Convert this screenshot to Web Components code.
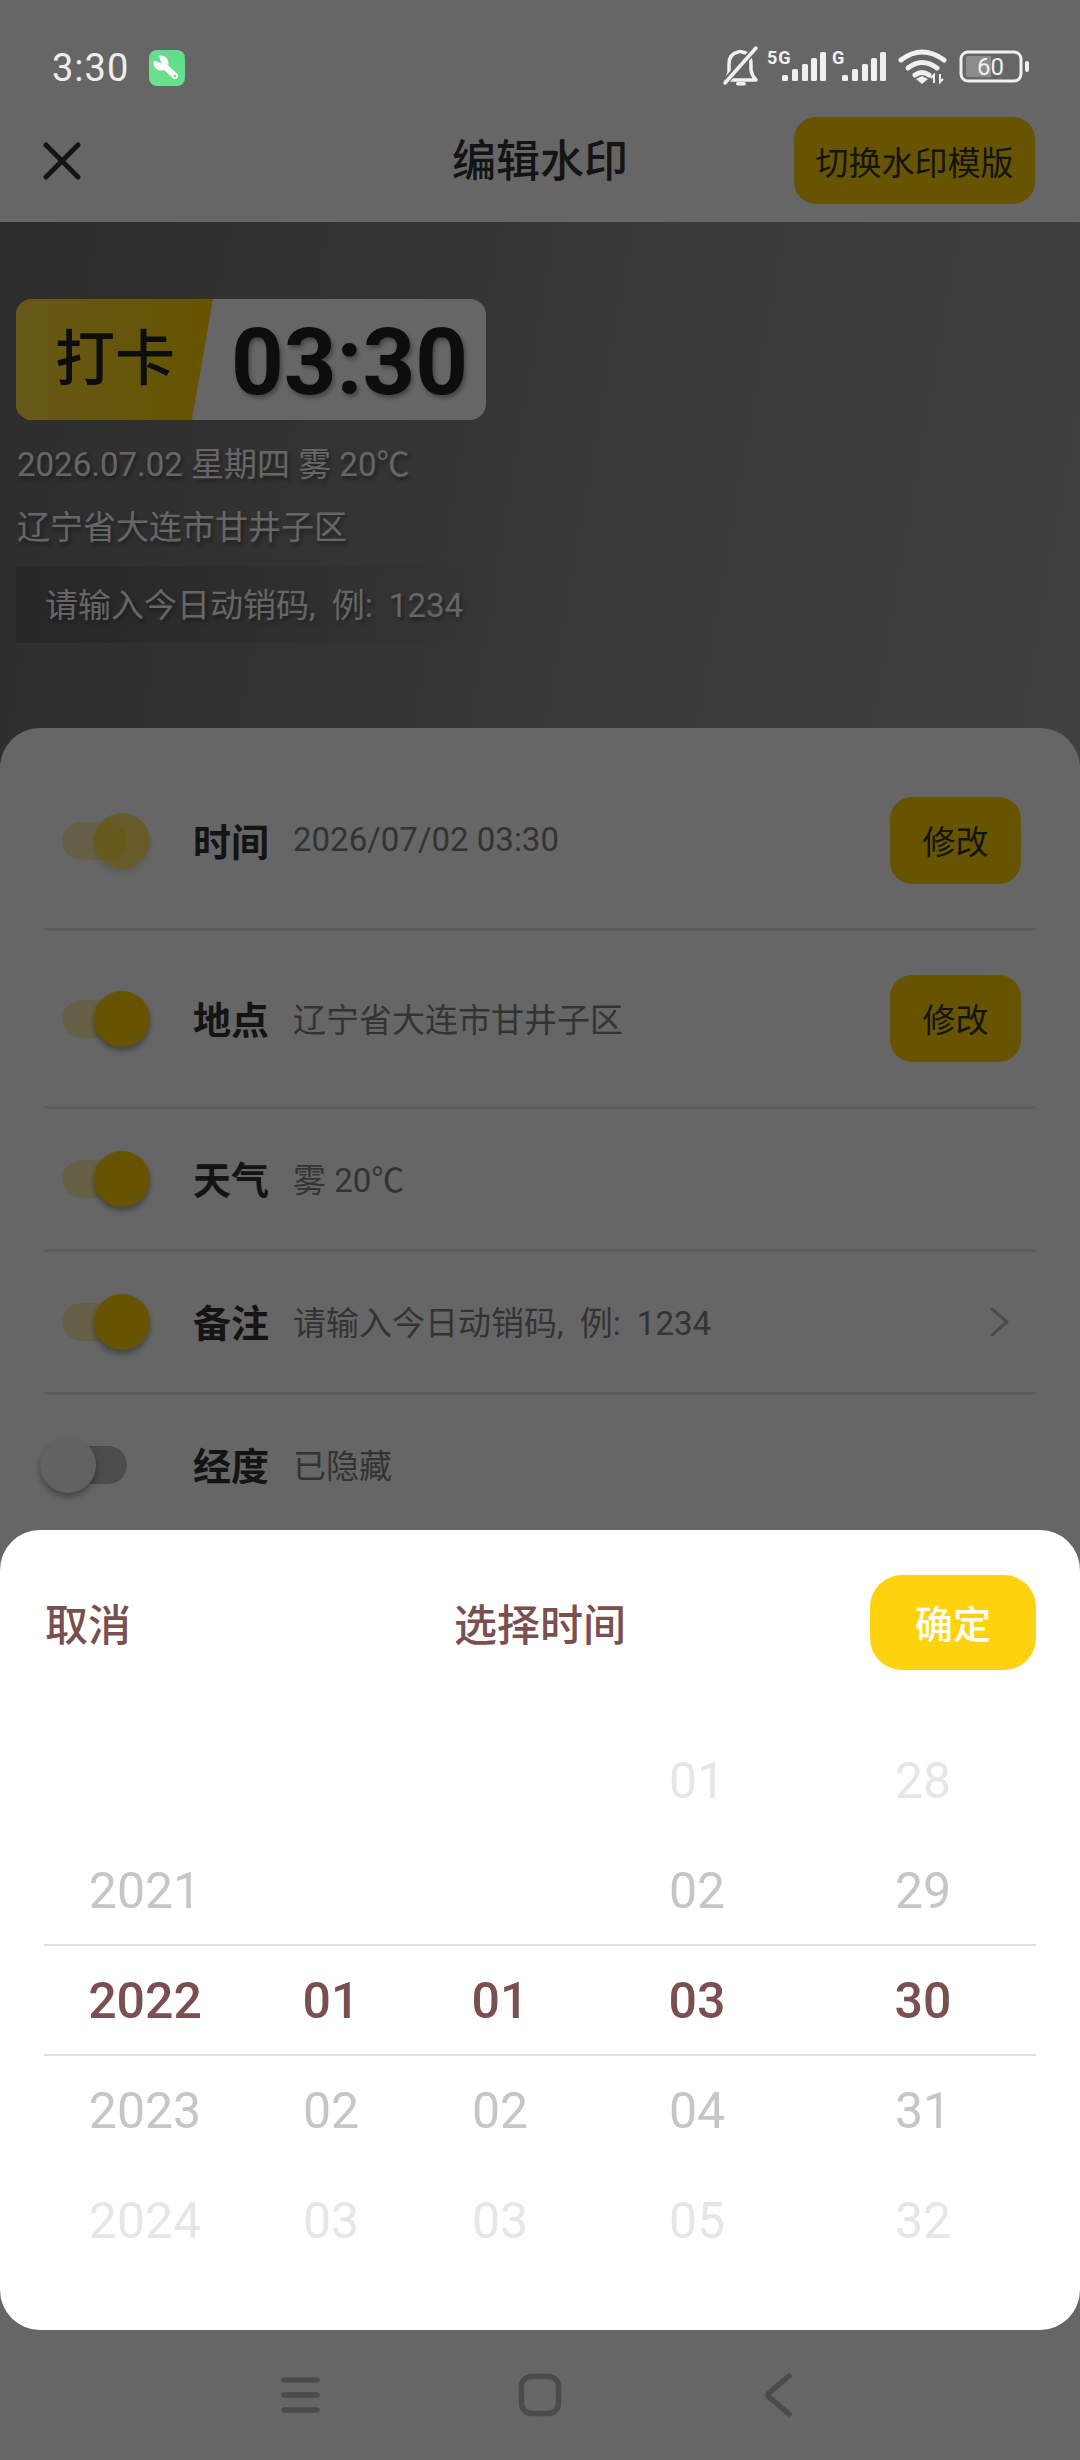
<!DOCTYPE html>
<html lang="zh">
<head>
<meta charset="utf-8">
<title>编辑水印</title>
<style>
  html, body { margin: 0; padding: 0; }
  body { width: 1080px; height: 2460px; overflow: hidden; font-family: Roboto, "Noto Sans CJK SC", sans-serif; }
</style>
</head>
<body>
<edit-page></edit-page>

<script>
const FONT = 'Roboto, "Noto Sans CJK SC", sans-serif';

// Status bar, sits above the dim layer
class StatusBar extends HTMLElement {
  constructor() {
    super();
    this.attachShadow({ mode: 'open' });
    this.shadowRoot.innerHTML = `
      <style>
        :host {
          display: flex;
          align-items: center;
          height: 136px;
          box-sizing: border-box;
          padding: 0 0 0 52px;
          color: #eee;
          font: 400 38px ${FONT};
        }
        .time { width: 97px; letter-spacing: 1px; }
        .app { width: 36px; height: 36px; display: block; }
        .icons { margin-left: auto; display: block; width: 360px; height: 50px; margin-right: 40px; }
      </style>
      <span class="time">3:30</span>
      <svg class="app" viewBox="0 0 36 36">
        <defs><linearGradient id="g" x1="0" y1="1" x2="1" y2="0"><stop offset="0" stop-color="#70e090"/><stop offset="1" stop-color="#5edc8a"/></linearGradient></defs>
        <rect width="36" height="36" rx="8" fill="url(#g)"/>
        <circle cx="12" cy="13" r="7.5" fill="#fff"/>
        <path d="M12 13L26 26" stroke="#fff" stroke-width="6" stroke-linecap="round"/>
        <path d="M12.5 13.5L9 3L2 9.5z" fill="#68de8c"/>
        <circle cx="26" cy="26" r="1.3" fill="#68de8c"/>
      </svg>
      <svg class="icons" viewBox="680 45 360 50" fill="#f0f0f0">
        <path d="M726 82h30q-4-4-5-10v-6q0-11-9-12q-2-1-4 0q-9 2-9 12v8q-1 5-3 8z" fill="none" stroke="#f0f0f0" stroke-width="3.5" stroke-linejoin="round"/>
        <path d="M726 83l30-33" stroke="#666" stroke-width="7"/>
        <path d="M725 85l31-35" stroke="#f0f0f0" stroke-width="3.5" stroke-linecap="round"/>
        <rect x="736" y="84" width="10" height="3.5" rx="1.7"/>
        <text x="767" y="66" font-family="Roboto, sans-serif" font-size="18" font-weight="700" letter-spacing="1">5G</text>
        <rect x="782" y="77" width="6" height="6" rx="1.5"/><rect x="792" y="71" width="6" height="12" rx="1.5"/><rect x="802" y="66" width="6" height="17" rx="1.5"/><rect x="811" y="60" width="6" height="23" rx="1.5"/><rect x="820" y="54" width="6" height="29" rx="1.5"/>
        <text x="832" y="66" font-family="Roboto, sans-serif" font-size="18" font-weight="700">G</text>
        <rect x="842" y="77" width="6" height="6" rx="1.5"/><rect x="852" y="71" width="6" height="12" rx="1.5"/><rect x="862" y="66" width="6" height="17" rx="1.5"/><rect x="871" y="60" width="6" height="23" rx="1.5"/><rect x="880" y="54" width="6" height="29" rx="1.5"/>
        <g fill="none" stroke="#f0f0f0" stroke-width="5" stroke-linecap="round">
          <path d="M901 62q21-16 43 0"/><path d="M908 70q14-11 29 0"/><path d="M915 77q7-5 14 0"/>
        </g>
        <path d="M916 81l6-3l6 3l-6 5z"/>
        <path d="M934 85v-8l-3 3M940 76v8l3-3" fill="none" stroke="#f0f0f0" stroke-width="2"/>
        <rect x="961" y="54" width="60" height="29" rx="7" fill="none" stroke="#f0f0f0" stroke-width="3"/>
        <path d="M969 58h22v21h-22q-3 0-3-3v-15q0-3 3-3z" fill="#8c8c8c"/>
        <rect x="1025" y="63" width="4" height="11" rx="2"/>
        <text x="977" y="77" font-family="Roboto, sans-serif" font-size="24">60</text>
      </svg>
    `;
  }
}

// Close button, title, template switch
class AppHeader extends HTMLElement {
  constructor() {
    super();
    this.attachShadow({ mode: 'open' });
    this.shadowRoot.innerHTML = `
      <style>
        :host {
          display: flex;
          align-items: center;
          height: 222px;
          box-sizing: border-box;
          padding: 117px 45px 18px 43px;
          background: #fff;
          position: relative;
          color: #333;
          font-family: ${FONT};
        }
        svg { width: 38px; height: 38px; display: block; }
        h1 {
          position: absolute;
          left: 0; right: 0; top: 139px;
          margin: 0;
          text-align: center;
          font-size: 44px;
          font-weight: 500;
          line-height: 46px;
        }
        button {
          margin-left: auto;
          width: 241px;
          height: 87px;
          padding: 0;
          border: 0;
          border-radius: 22px;
          background: #ffd200;
          color: #333;
          font: 400 33px ${FONT};
        }
      </style>
      <svg viewBox="0 0 38 38" fill="none" stroke="#333" stroke-width="5" stroke-linecap="round"><path d="M3 3l32 32M35 3L3 35"/></svg>
      <h1>编辑水印</h1>
      <button>切换水印模版</button>
    `;
  }
}

// Photo area with the watermark preview
class WatermarkPreview extends HTMLElement {
  constructor() {
    super();
    this.attachShadow({ mode: 'open' });
    this.shadowRoot.innerHTML = `
      <style>
        :host {
          display: block;
          box-sizing: border-box;
          height: 506px;
          padding: 77px 0 0 16px;
          color: #fff;
          font-family: ${FONT};
        }
        .stamp {
          display: flex;
          width: 470px;
          height: 121px;
          border-radius: 16px;
          overflow: hidden;
          background: #fff;
        }
        .tag {
          width: 197px;
          flex: none;
          clip-path: polygon(0 0, 100% 0, 89.3% 100%, 0 100%);
          background: linear-gradient(90deg, #ffdf3f, #ffd200);
          color: #222;
          font-size: 60px;
          font-weight: 500;
          line-height: 121px;
          padding-left: 39px;
          box-sizing: border-box;
          white-space: nowrap;
        }
        .clock {
          margin-left: 18px;
          padding-top: 3px;
          color: #222;
          font-size: 92px;
          font-weight: 700;
          line-height: 121px;
          text-shadow: 2px 3px 4px rgba(0,0,0,.35);
          white-space: nowrap;
        }
        .line {
          font-size: 33px;
          line-height: 40px;
          margin: 0;
          padding-left: 1px;
          text-shadow: 2px 3px 4px rgba(0,0,0,.4);
          white-space: nowrap;
        }
        .date { margin-top: 25px; }
        .addr { margin-top: 23px; }
        .note {
          margin-top: 18px;
          width: 490px;
          height: 77px;
          box-sizing: border-box;
          padding: 1px 0 0 29px;
          background: linear-gradient(90deg, rgba(0,0,0,.16), rgba(0,0,0,0));
          font-size: 33px;
          line-height: 77px;
          word-spacing: 8px;
          white-space: nowrap;
          text-shadow: 2px 3px 4px rgba(0,0,0,.4);
        }
      </style>
      <div class="stamp"><div class="tag">打卡</div><div class="clock">03:30</div></div>
      <p class="line date">2026.07.02 星期四 雾 20℃</p>
      <p class="line addr">辽宁省大连市甘井子区</p>
      <div class="note">请输入今日动销码, 例: 1234</div>
    `;
  }
}

class ToggleSwitch extends HTMLElement {
  constructor() {
    super();
    this.attachShadow({ mode: 'open' });
    this.shadowRoot.innerHTML = `
      <style>
        :host {
          display: block;
          position: relative;
          width: 65px;
          height: 38px;
          margin-left: 18px;
          flex: none;
        }
        .track {
          height: 100%;
          border-radius: 19px;
          background: rgba(255,210,0,.3);
        }
        .thumb {
          position: absolute;
          top: -9px;
          left: 32px;
          width: 56px;
          height: 56px;
          border-radius: 50%;
          background: #ffd200;
          box-shadow: 0 4px 6px rgba(0,0,0,.35);
        }
        :host([dim]) .thumb { background: rgba(255,210,0,.6); box-shadow: 0 4px 6px rgba(0,0,0,.12); }
        :host([off]) .track { background: #bdbdbd; }
        :host([off]) .thumb { left: -22px; background: #f4f4f4; }
      </style>
      <div class="track"></div>
      <div class="thumb"></div>
    `;
  }
}

// One row of the settings list
class SettingRow extends HTMLElement {
  constructor() {
    super();
    this.attachShadow({ mode: 'open' });
    const action = this.getAttribute('action');
    const end = action === 'edit'
      ? '<button>修改</button>'
      : action === 'more'
        ? '<svg class="more" viewBox="0 0 19 30" fill="none" stroke="#bdbdbd" stroke-width="3" stroke-linecap="round" stroke-linejoin="round"><path d="M2 2l15 13L2 28"/></svg>'
        : '';
    this.shadowRoot.innerHTML = `
      <style>
        :host {
          display: flex;
          align-items: center;
          box-sizing: border-box;
          height: 143px;
          margin: 0 44px;
          border-bottom: 3px solid #e6e6e6;
          font-family: ${FONT};
        }
        :host([tall]) { height: 178px; }
        .name {
          margin-left: 66px;
          width: 100px;
          flex: none;
          padding-bottom: 3px;
          font-size: 38px;
          font-weight: 700;
          color: #333;
        }
        .value {
          padding-bottom: 2px;
          font-size: 33px;
          color: #808080;
          white-space: nowrap;
        }
        button {
          margin-left: auto;
          margin-right: 15px;
          width: 131px;
          height: 87px;
          padding: 0 0 2px;
          border: 0;
          border-radius: 22px;
          background: #ffd200;
          color: #333;
          font: 400 33px ${FONT};
        }
        .more { margin-left: auto; margin-right: 27px; width: 19px; height: 30px; display: block; }
      </style>
      <toggle-switch ${this.hasAttribute('dim') ? 'dim' : ''} ${this.hasAttribute('off') ? 'off' : ''}></toggle-switch>
      <span class="name">${this.getAttribute('name')}</span>
      <span class="value"><slot></slot></span>
      ${end}
    `;
  }
}

class NavBar extends HTMLElement {
  constructor() {
    super();
    this.attachShadow({ mode: 'open' });
    this.shadowRoot.innerHTML = `
      <style>
        :host { display: block; height: 128px; margin-top: auto; position: relative; }
        svg { display: block; width: 1080px; height: 128px; }
      </style>
      <svg viewBox="0 2332 1080 128" fill="none" stroke="#bbb" stroke-width="5.5" stroke-linecap="round" stroke-linejoin="round">
        <path d="M284 2380h33M284 2395h33M284 2410h33"/>
        <rect x="521.5" y="2376.5" width="37" height="37" rx="10"/>
        <path d="M789 2376l-20 17q-2 2 0 4l20 17"/>
      </svg>
    `;
  }
}

// One wheel of the picker. Items are given around the selected one.
class PickerColumn extends HTMLElement {
  constructor() {
    super();
    this.attachShadow({ mode: 'open' });
    const items = this.getAttribute('items').split(',');
    this.shadowRoot.innerHTML = `
      <style>
        :host {
          display: block;
          position: absolute;
          top: 1px;
          width: 200px;
          margin-left: -100px;
          text-align: center;
          font: 400 50px/110px ${FONT};
        }
        div { height: 110px; }
        .d2 { color: #e6e6e6; }
        .d1 { color: #c6c6c6; }
        .d0 { color: #7a4f4f; font-weight: 500; }
      </style>
      ${items.map((item, i) => `<div class="d${Math.abs(i - 2)}">${item}</div>`).join('')}
    `;
  }
}

class TimePicker extends HTMLElement {
  constructor() {
    super();
    this.attachShadow({ mode: 'open' });
    this.shadowRoot.innerHTML = `
      <style>
        :host {
          display: block;
          box-sizing: border-box;
          background: #fff;
          border-radius: 40px;
          color: #7a4f4f;
          font-family: ${FONT};
        }
        .head {
          display: flex;
          align-items: center;
          justify-content: space-between;
          height: 95px;
          margin: 45px 44px 0 45px;
          font-size: 43px;
          font-weight: 500;
          position: relative;
        }
        .head span { padding-bottom: 2px; }
        .head span:nth-child(2) { position: absolute; left: 409px; }
        button {
          width: 166px;
          height: 95px;
          padding: 0 0 2px;
          border: 0;
          border-radius: 32px;
          background: #ffd20f;
          color: #fff;
          font: 500 38px ${FONT};
        }
        .wheels {
          position: relative;
          height: 550px;
          margin-top: 55px;
        }
        .band {
          position: absolute;
          left: 44px;
          right: 44px;
          top: 219px;
          height: 112px;
          box-sizing: border-box;
          border-top: 2px solid #e0e0e0;
          border-bottom: 2px solid #e0e0e0;
        }
      </style>
      <div class="head"><span>取消</span><span>选择时间</span><button>确定</button></div>
      <div class="wheels">
        <div class="band"></div>
        <slot></slot>
      </div>
    `;
  }
}

// Whole page
class EditPage extends HTMLElement {
  constructor() {
    super();
    this.attachShadow({ mode: 'open' });
    this.shadowRoot.innerHTML = `
      <style>
        :host {
          display: block;
          position: relative;
          width: 1080px;
          height: 2460px;
          overflow: hidden;
        }
        .screen {
          display: flex;
          flex-direction: column;
          height: 100%;
          background: linear-gradient(100deg, #6e6e6e 0%, #a4a4a4 100%) no-repeat;
          background-size: 100% 800px;
        }
        .panel {
          flex: 1;
          display: flex;
          flex-direction: column;
          box-sizing: border-box;
          padding-top: 25px;
          background: #fff;
          border-radius: 40px 40px 0 0;
        }
        .dim {
          position: absolute;
          inset: 0;
          background: rgba(0,0,0,.6);
        }
        status-bar { position: absolute; left: 0; right: 0; top: 0; }
        time-picker { position: absolute; left: 0; right: 0; top: 1530px; height: 800px; }
        picker-column:nth-child(1) { left: 145px; }
        picker-column:nth-child(2) { left: 331px; }
        picker-column:nth-child(3) { left: 500px; }
        picker-column:nth-child(4) { left: 697px; }
        picker-column:nth-child(5) { left: 923px; }
        .spaced { word-spacing: 8px; }
      </style>
      <div class="screen">
        <app-header></app-header>
        <watermark-preview></watermark-preview>
        <div class="panel">
          <setting-row tall dim name="时间" action="edit">2026/07/02 03:30</setting-row>
          <setting-row tall name="地点" action="edit">辽宁省大连市甘井子区</setting-row>
          <setting-row name="天气">雾 20℃</setting-row>
          <setting-row name="备注" action="more"><span class="spaced">请输入今日动销码, 例: 1234</span></setting-row>
          <setting-row off name="经度">已隐藏</setting-row>
          <nav-bar></nav-bar>
        </div>
      </div>
      <div class="dim"></div>
      <status-bar></status-bar>
      <time-picker>
        <picker-column items=",2021,2022,2023,2024"></picker-column>
        <picker-column items=",,01,02,03"></picker-column>
        <picker-column items=",,01,02,03"></picker-column>
        <picker-column items="01,02,03,04,05"></picker-column>
        <picker-column items="28,29,30,31,32"></picker-column>
      </time-picker>
    `;
  }
}

customElements.define('status-bar', StatusBar);
customElements.define('app-header', AppHeader);
customElements.define('watermark-preview', WatermarkPreview);
customElements.define('toggle-switch', ToggleSwitch);
customElements.define('setting-row', SettingRow);
customElements.define('nav-bar', NavBar);
customElements.define('picker-column', PickerColumn);
customElements.define('time-picker', TimePicker);
customElements.define('edit-page', EditPage);
</script>
</body>
</html>
